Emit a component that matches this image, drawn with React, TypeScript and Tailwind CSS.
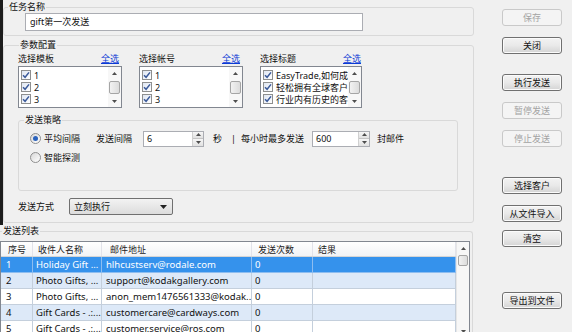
import React from 'react';

const rows = [
  { no: '1', name: 'Holiday Gift ...', mail: 'hlhcustserv@rodale.com', n: '0' },
  { no: '2', name: 'Photo Gifts, ...', mail: 'support@kodakgallery.com', n: '0' },
  { no: '3', name: 'Photo Gifts, ...', mail: 'anon_mem1476561333@kodak...', n: '0' },
  { no: '4', name: 'Gift Cards - .:...', mail: 'customercare@cardways.com', n: '0' },
  { no: '5', name: 'Gift Cards - .:...', mail: 'customer.service@ros.com', n: '0' },
];

function Up() {
  return (
    <svg width="5" height="3" viewBox="0 0 5 3">
      <path d="M0 3 L2.5 0 L5 3Z" fill="#4d4d4d" />
    </svg>
  );
}

function Down() {
  return (
    <svg width="5" height="3" viewBox="0 0 5 3">
      <path d="M0 0 L2.5 3 L5 0Z" fill="#4d4d4d" />
    </svg>
  );
}

function Check() {
  return (
    <span className="w-[10px] h-[10px] shrink-0 border border-[#8e8f8f] bg-linear-to-br from-[#dfe6f2] to-white flex items-center justify-center">
      <svg width="8" height="8" viewBox="0 0 8 8">
        <path d="M1 4.2 L3.1 6.3 L7 1.4" fill="none" stroke="#3b5a9a" strokeWidth="1.5" />
      </svg>
    </span>
  );
}

function Radio({ on }: { on?: boolean }) {
  return (
    <span className="w-[11px] h-[11px] shrink-0 rounded-full border border-[#8f8f8f] bg-linear-to-br from-[#d8d8d8] to-white flex items-center justify-center">
      {on && <span className="w-[5px] h-[5px] rounded-full bg-[#2b63bd]" />}
    </span>
  );
}

function ListBox({ items }: { items: string[] }) {
  return (
    <div className="h-[42px] border border-[#828790] bg-white flex">
      <div className="flex-1 min-w-0 pt-[2px] overflow-hidden">
        {items.map((t) => (
          <div key={t} className="h-[12px] pl-[2px] flex items-center gap-[3px] whitespace-nowrap">
            <Check />
            <span className="leading-none">{t}</span>
          </div>
        ))}
      </div>
      <div className="w-[13px] flex flex-col bg-[#f7f7f7]">
        <div className="h-[12px] flex items-center justify-center">
          <Up />
        </div>
        <div className="mt-[2px] mx-[1px] h-[13px] rounded-[2px] border border-[#a5a5a5] bg-linear-to-r from-[#f2f2f2] to-[#dcdcdc]" />
        <div className="flex-1" />
        <div className="h-[12px] flex items-center justify-center">
          <Down />
        </div>
      </div>
    </div>
  );
}

function Spin({ value, w }: { value: string; w: string }) {
  return (
    <div className={`h-[16px] border border-[#abadb3] bg-white flex ${w}`}>
      <span className="flex-1 pl-[3px] leading-[14px]">{value}</span>
      <div className="w-[11px] flex flex-col border-l border-[#d0d0d0]">
        <div className="flex-1 flex items-center justify-center bg-linear-to-b from-[#f6f6f6] to-[#e1e1e1] border-b border-[#c4c4c4]">
          <Up />
        </div>
        <div className="flex-1 flex items-center justify-center bg-linear-to-b from-[#f6f6f6] to-[#e1e1e1]">
          <Down />
        </div>
      </div>
    </div>
  );
}

function Btn({ label, off, cls }: { label: string; off?: boolean; cls: string }) {
  return (
    <button
      type="button"
      className={`${cls} w-[60px] h-[17px] rounded-[3px] border flex items-center justify-center leading-none ${
        off
          ? 'border-[#c9c9c9] bg-[#f4f4f4] text-[#a3a3a3]'
          : 'border-[#707070] bg-linear-to-b from-[#f3f3f3] via-[#e9e9e9] to-[#d4d4d4] text-[#111] shadow-[inset_0_0_0_1px_#fbfbfb]'
      }`}
    >
      {label}
    </button>
  );
}

function ColHead({ label }: { label: string }) {
  return (
    <div className="w-[104px] h-[15px] pr-[3px] flex items-center justify-between">
      <span>{label}</span>
      <span className="text-[#0b3bd6] underline">全选</span>
    </div>
  );
}

export default function App() {
  return (
    <div className="w-[572px] h-[332px] overflow-hidden bg-[#f0f0f0] flex font-['Noto_Sans','Noto_Sans_CJK_SC',sans-serif] text-[9px] text-[#111]">
      <div className="w-[474px] flex flex-col">
        <div className="border-l-[3px] border-[#1c1c1c] pb-[2px]">
          {/* 任务名称 */}
          <fieldset className="mt-[1px] border border-[#d9d9d9] rounded-[3px] pb-[4px]">
            <legend className="ml-[4px] px-[1px] leading-[12px]">任务名称</legend>
            <div className="ml-[21px] w-[338px] h-[18px] border border-[#abadb3] bg-white pl-[4px] flex items-center">
              gift第一次发送
            </div>
          </fieldset>

          {/* 参数配置 */}
          <fieldset className="mt-[3px] border border-[#d9d9d9] rounded-[3px] pl-[14px] pb-[7px]">
            <legend className="ml-[1px] px-[1px] leading-[12px]">参数配置</legend>
            <div className="flex gap-[17px]">
              <div>
                <ColHead label="选择模板" />
                <ListBox items={['1', '2', '3']} />
              </div>
              <div>
                <ColHead label="选择帐号" />
                <ListBox items={['1', '2', '3']} />
              </div>
              <div className="w-[102px]">
                <ColHead label="选择标题" />
                <ListBox items={['EasyTrade,如何成', '轻松拥有全球客户', '行业内有历史的客']} />
              </div>
            </div>

            <fieldset className="mt-[6px] w-[440px] border border-[#d9d9d9] rounded-[3px] pb-[24px]">
              <legend className="ml-[5px] px-[1px] leading-[12px]">发送策略</legend>
              <div className="mt-[4px] h-[17px] flex items-center whitespace-nowrap">
                <span className="ml-[11px]">
                  <Radio on />
                </span>
                <span className="ml-[3px]">平均间隔</span>
                <span className="ml-[16px]">发送间隔</span>
                <span className="ml-[11px]">
                  <Spin value="6" w="w-[61px]" />
                </span>
                <span className="ml-[9px]">秒</span>
                <span className="ml-[9px]">|</span>
                <span className="ml-[5px]">每小时最多发送</span>
                <span className="ml-[8px]">
                  <Spin value="600" w="w-[58px]" />
                </span>
                <span className="ml-[7px]">封邮件</span>
              </div>
              <div className="mt-[2px] h-[17px] flex items-center">
                <span className="ml-[11px]">
                  <Radio />
                </span>
                <span className="ml-[3px]">智能探测</span>
              </div>
            </fieldset>

            <div className="mt-[7px] h-[17px] flex items-center">
              <span className="w-[51px]">发送方式</span>
              <div className="w-[104px] h-[17px] rounded-[2px] border border-[#707070] bg-linear-to-b from-[#f3f3f3] to-[#dcdcdc] flex items-center pl-[4px] pr-[5px] justify-between">
                <span>立刻执行</span>
                <svg width="7" height="4" viewBox="0 0 7 4">
                  <path d="M0 0 L3.5 4 L7 0Z" fill="#222" />
                </svg>
              </div>
            </div>
          </fieldset>
        </div>

        {/* 发送列表 */}
        <fieldset className="w-[473px] border-t border-r border-[#d9d9d9] rounded-tr-[3px]">
          <legend className="ml-[2px] px-[1px] leading-[12px]">发送列表</legend>
          <div className="mt-[4px] w-[470px] h-[120px] border border-[#828790] bg-white flex">
            <div className="flex-1">
              <div className="h-[15px] flex bg-linear-to-b from-white to-[#f2f3f5] border-b border-[#d5d5d5] text-[#222]">
                <div className="w-[32px] pl-[7px] leading-[15px] border-r border-[#e2e3ea]">序号</div>
                <div className="w-[69px] pl-[5px] leading-[15px] border-r border-[#e2e3ea]">收件人名称</div>
                <div className="w-[150px] pl-[8px] leading-[15px] border-r border-[#e2e3ea]">邮件地址</div>
                <div className="w-[61px] pl-[6px] leading-[15px] border-r border-[#e2e3ea]">发送次数</div>
                <div className="w-[143px] pl-[5px] leading-[15px] border-r border-[#e2e3ea]">结果</div>
              </div>
              {rows.map((r, i) => (
                <div
                  key={r.no}
                  className={`h-[16px] flex text-[9.5px] whitespace-nowrap border-b ${
                    i === 0
                      ? 'bg-[#3592ec] text-white border-[#8dbdf0]'
                      : i % 2 === 1
                        ? 'bg-[#dde9f8] border-[#c4cfdc]'
                        : 'bg-white border-[#c4cfdc]'
                  }`}
                >
                  <div className={`w-[32px] pl-[5px] leading-[15px] border-r ${i === 0 ? 'border-[#8dbdf0]' : 'border-[#c4cfdc]'}`}>{r.no}</div>
                  <div className={`w-[69px] pl-[3px] leading-[15px] overflow-hidden border-r ${i === 0 ? 'border-[#8dbdf0]' : 'border-[#c4cfdc]'}`}>{r.name}</div>
                  <div className={`w-[150px] pl-[4px] leading-[15px] overflow-hidden border-r ${i === 0 ? 'border-[#8dbdf0]' : 'border-[#c4cfdc]'}`}>{r.mail}</div>
                  <div className={`w-[61px] pl-[3px] leading-[15px] border-r ${i === 0 ? 'border-[#8dbdf0]' : 'border-[#c4cfdc]'}`}>{r.n}</div>
                  <div className={`w-[143px] border-r ${i === 0 ? 'border-[#8dbdf0]' : 'border-[#c4cfdc]'}`} />
                </div>
              ))}
            </div>
            <div className="w-[13px] flex flex-col bg-[#f7f7f7] border-l border-[#e6e6e6]">
              <div className="h-[12px] flex items-center justify-center">
                <Up />
              </div>
              <div className="mt-[1px] mx-[1px] h-[11px] rounded-[2px] border border-[#a5a5a5] bg-linear-to-r from-[#f2f2f2] to-[#dcdcdc]" />
              <div className="h-[59px]" />
              <div className="h-[12px] flex items-center justify-center">
                <Down />
              </div>
            </div>
          </div>
        </fieldset>
      </div>

      <div className="flex-1 pl-[28px] flex flex-col">
        <Btn cls="mt-[9px]" label="保存" off />
        <Btn cls="mt-[11px]" label="关闭" />
        <Btn cls="mt-[20px]" label="执行发送" />
        <Btn cls="mt-[11px]" label="暂停发送" off />
        <Btn cls="mt-[11px]" label="停止发送" off />
        <Btn cls="mt-[30px]" label="选择客户" />
        <Btn cls="mt-[11px]" label="从文件导入" />
        <Btn cls="mt-[8px]" label="清空" />
        <Btn cls="mt-[45px]" label="导出到文件" />
      </div>
    </div>
  );
}
